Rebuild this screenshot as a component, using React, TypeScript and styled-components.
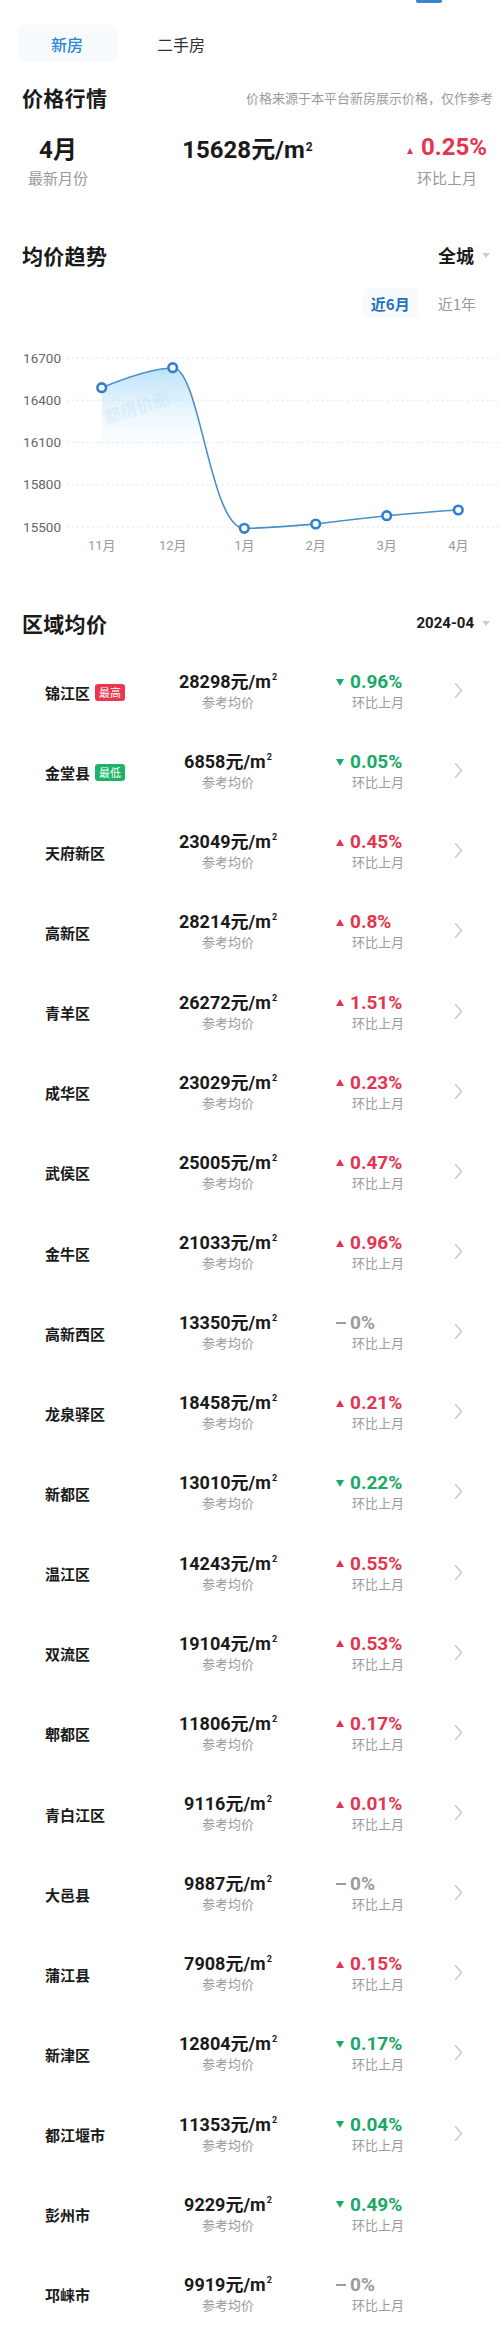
import React from "react";
import styled, { createGlobalStyle, css } from "styled-components";

const GlobalStyle = createGlobalStyle`
  html, body { margin: 0; padding: 0; background: #fff; }
  body {
    font-family: "Noto Sans CJK SC", "Noto Sans", sans-serif;
    color: #1a1a1a;
    -webkit-font-smoothing: antialiased;
  }
  * { box-sizing: border-box; }
`;

const NUM_FONT = `Roboto, "Noto Sans CJK SC", sans-serif`;
const RED = "#e5344f";
const GREEN = "#1aa866";
const GRAY = "#9a9a9a";

const Page = styled.div`
  width: 500px;
  overflow: hidden;
  padding-bottom: 5px;
`;

const TopStrip = styled.div`
  height: 3px;
  display: flex;
  padding-left: 416px;
`;

const TopIndicator = styled.div`
  width: 26px;
  height: 2.5px;
  border-radius: 0 0 2px 2px;
  background: #3a84d0;
`;

const Tabs = styled.div`
  display: flex;
  gap: 14px;
  padding-left: 17px;
  margin-top: 22px;
`;

const Tab = styled.div<{ $active?: boolean }>`
  width: 100px;
  height: 37px;
  border-radius: 6px;
  display: flex;
  align-items: center;
  justify-content: center;
  font-size: 16px;
  color: #333;
  ${(p) =>
    p.$active &&
    css`
      background: #f8fbfe;
      color: #2b86d9;
      font-weight: 500;
    `}
`;

const SectionHeader = styled.div<{ $top: number }>`
  display: flex;
  align-items: center;
  justify-content: space-between;
  height: 30px;
  margin-top: ${(p) => p.$top}px;
  padding: 0 10px 0 22px;
`;

const SectionTitle = styled.h2`
  margin: 0;
  font-size: 21px;
  font-weight: 700;
  color: #1a1a1a;
  letter-spacing: 0.3px;
`;

const Note = styled.span`
  font-size: 13px;
  color: ${GRAY};
  white-space: nowrap;
  margin-right: -3px;
`;

const Stats = styled.div`
  display: flex;
  justify-content: space-between;
  padding: 0 13px 0 28px;
  margin-top: 19px;
`;

const Stat = styled.div`
  display: flex;
  flex-direction: column;
  align-items: center;
`;

const StatValue = styled.div<{ $color?: string }>`
  display: flex;
  align-items: center;
  height: 32px;
  font-family: ${NUM_FONT};
  font-size: 24px;
  font-weight: 700;
  color: ${(p) => p.$color || "#1a1a1a"};
`;

const StatLabel = styled.div`
  margin-top: 5px;
  line-height: 20px;
  font-size: 15px;
  color: ${GRAY};
`;

const Sup = styled.span`
  font-size: 0.5em;
  vertical-align: 0.9em;
  line-height: 0;
  margin-left: 1px;
`;

const Triangle = styled.span<{ $dir: "up" | "down"; $size?: number }>`
  display: inline-block;
  width: 0;
  height: 0;
  border-left: ${(p) => (p.$size || 7) / 2}px solid transparent;
  border-right: ${(p) => (p.$size || 7) / 2}px solid transparent;
  ${(p) =>
    p.$dir === "up"
      ? css`
          border-bottom: ${(p.$size || 7) - 1}px solid ${RED};
        `
      : css`
          border-top: ${(p.$size || 7) - 1}px solid ${GREEN};
        `}
`;

const StatTriangle = styled(Triangle)`
  align-self: flex-end;
  margin: 0 8px 9px 0;
`;

const Picker = styled.div`
  display: flex;
  align-items: center;
  gap: 8px;
`;

const PickerText = styled.span<{ $num?: boolean }>`
  font-size: ${(p) => (p.$num ? "15px" : "18px")};
  font-weight: 700;
  font-family: ${(p) => (p.$num ? NUM_FONT : "inherit")};
  color: #1a1a1a;
`;

const Caret = styled.span`
  width: 0;
  height: 0;
  border-left: 4px solid transparent;
  border-right: 4px solid transparent;
  border-top: 5px solid #cfcfcf;
`;

const RangeRow = styled.div`
  display: flex;
  justify-content: flex-end;
  gap: 12px;
  margin-top: 18px;
  padding-right: 16px;
  height: 30px;
`;

const RangeOption = styled.div<{ $active?: boolean }>`
  display: flex;
  align-items: center;
  padding: 0 8px;
  border-radius: 4px;
  font-size: 15px;
  color: ${(p) => (p.$active ? "#1f70c1" : GRAY)};
  font-weight: ${(p) => (p.$active ? 700 : 400)};
  background: ${(p) => (p.$active ? "#f8fbfe" : "transparent")};
`;

const ChartSvg = styled.svg`
  display: block;
  width: 500px;
  height: 250px;
`;

const RegionList = styled.div`
  margin-top: 14px;
`;

const RegionRow = styled.div`
  display: grid;
  grid-template-columns: 120px 126px 1fr 20px;
  align-items: center;
  height: 80.15px;
  padding: 0 26px 0 45px;
`;

const NameCell = styled.div`
  display: flex;
  align-items: center;
  gap: 5px;
`;

const Name = styled.span`
  font-size: 15px;
  font-weight: 700;
  color: #1a1a1a;
  white-space: nowrap;
`;

const Badge = styled.span<{ $kind: "high" | "low" }>`
  display: inline-flex;
  align-items: center;
  justify-content: center;
  height: 17px;
  padding: 0 4px;
  border-radius: 3px;
  font-size: 11px;
  color: #fff;
  background: ${(p) => (p.$kind === "high" ? "#e8374f" : "#1db46a")};
`;

const PriceCell = styled.div`
  display: flex;
  flex-direction: column;
  align-items: center;
`;

const Price = styled.div`
  line-height: 20px;
  font-family: ${NUM_FONT};
  font-size: 18px;
  font-weight: 700;
  color: #1a1a1a;
  white-space: nowrap;
`;

const SubLabel = styled.div`
  line-height: 20px;
  font-size: 13px;
  color: ${GRAY};
`;

const ChangeCell = styled.div`
  display: flex;
  align-items: flex-start;
  padding-left: 45px;
`;

const ChangeMark = styled.div`
  width: 14px;
  height: 20px;
  display: flex;
  align-items: center;
`;

const Dash = styled.span`
  width: 10px;
  height: 2px;
  background: ${GRAY};
`;

const ChangeBody = styled.div`
  display: flex;
  flex-direction: column;
  align-items: flex-start;
`;

const ChangeValue = styled.div<{ $trend: "up" | "down" | "flat" }>`
  line-height: 20px;
  font-family: ${NUM_FONT};
  font-size: 19px;
  font-weight: 700;
  color: ${(p) => (p.$trend === "up" ? RED : p.$trend === "down" ? GREEN : GRAY)};
`;

const ChangeSub = styled(SubLabel)`
  padding-left: 2px;
`;

const Chevron = () => (
  <svg width="9" height="17" viewBox="0 0 9 17">
    <path d="M1.5 1.5 L7.5 8.5 L1.5 15.5" fill="none" stroke="#c9c9c9" strokeWidth="1.4" strokeLinecap="round" strokeLinejoin="round" />
  </svg>
);

type Trend = "up" | "down" | "flat";
interface Region {
  name: string;
  price: number;
  trend: Trend;
  change: string;
  badge?: "high" | "low";
  arrow: boolean;
}

const regions: Region[] = [
  { name: "锦江区", price: 28298, trend: "down", change: "0.96%", badge: "high", arrow: true },
  { name: "金堂县", price: 6858, trend: "down", change: "0.05%", badge: "low", arrow: true },
  { name: "天府新区", price: 23049, trend: "up", change: "0.45%", arrow: true },
  { name: "高新区", price: 28214, trend: "up", change: "0.8%", arrow: true },
  { name: "青羊区", price: 26272, trend: "up", change: "1.51%", arrow: true },
  { name: "成华区", price: 23029, trend: "up", change: "0.23%", arrow: true },
  { name: "武侯区", price: 25005, trend: "up", change: "0.47%", arrow: true },
  { name: "金牛区", price: 21033, trend: "up", change: "0.96%", arrow: true },
  { name: "高新西区", price: 13350, trend: "flat", change: "0%", arrow: true },
  { name: "龙泉驿区", price: 18458, trend: "up", change: "0.21%", arrow: true },
  { name: "新都区", price: 13010, trend: "down", change: "0.22%", arrow: true },
  { name: "温江区", price: 14243, trend: "up", change: "0.55%", arrow: true },
  { name: "双流区", price: 19104, trend: "up", change: "0.53%", arrow: true },
  { name: "郫都区", price: 11806, trend: "up", change: "0.17%", arrow: true },
  { name: "青白江区", price: 9116, trend: "up", change: "0.01%", arrow: true },
  { name: "大邑县", price: 9887, trend: "flat", change: "0%", arrow: true },
  { name: "蒲江县", price: 7908, trend: "up", change: "0.15%", arrow: true },
  { name: "新津区", price: 12804, trend: "down", change: "0.17%", arrow: true },
  { name: "都江堰市", price: 11353, trend: "down", change: "0.04%", arrow: true },
  { name: "彭州市", price: 9229, trend: "down", change: "0.49%", arrow: false },
  { name: "邛崃市", price: 9919, trend: "flat", change: "0%", arrow: false },
];

const yTicks = [
  { label: "16700", y: 40 },
  { label: "16400", y: 82.25 },
  { label: "16100", y: 124.5 },
  { label: "15800", y: 166.75 },
  { label: "15500", y: 209 },
];

const points = [
  { m: "11月", x: 101.7, y: 69.7 },
  { m: "12月", x: 172.7, y: 49.7 },
  { m: "1月", x: 244.3, y: 210.3 },
  { m: "2月", x: 315.7, y: 206 },
  { m: "3月", x: 386.7, y: 197.7 },
  { m: "4月", x: 458.3, y: 192 },
];

const linePath =
  "M101.7,69.7 C125,60 150,51 172.7,49.7 C200,49.7 210,210.3 244.3,210.3 C268,210.3 292,208 315.7,206 C340,203 362,200.5 386.7,197.7 C410,195.5 434,193.5 458.3,192";

const TrendChart = () => (
  <ChartSvg viewBox="0 0 500 250">
    <defs>
      <linearGradient id="areaFill" x1="0" y1="48" x2="0" y2="138" gradientUnits="userSpaceOnUse">
        <stop offset="0" stopColor="#8fcdf5" stopOpacity="0.62" />
        <stop offset="0.6" stopColor="#c8e9fc" stopOpacity="0.3" />
        <stop offset="1" stopColor="#e6f6ff" stopOpacity="0" />
      </linearGradient>
    </defs>
    {yTicks.map((t) => (
      <g key={t.label}>
        <line x1="67" x2="500" y1={t.y} y2={t.y} stroke="#dcdcdc" strokeWidth="1" strokeDasharray="1.5 3.5" />
        <text x="61" y={t.y + 4.7} textAnchor="end" fontFamily="Roboto, sans-serif" fontSize="13.5" fill="#666">
          {t.label}
        </text>
      </g>
    ))}
    <path d={`${linePath} L458.3,209 L101.7,209 Z`} fill="url(#areaFill)" />
    <text
      x="137"
      y="96"
      textAnchor="middle"
      fontFamily='"Noto Sans CJK SC", sans-serif'
      fontSize="17"
      fontWeight="700"
      fill="rgba(150,190,225,0.16)"
      transform="rotate(-18 137 90)"
    >
      都房价圈
    </text>
    <path d={linePath} fill="none" stroke="#4a8fc9" strokeWidth="1.6" />
    {points.map((p) => (
      <g key={p.m}>
        <circle cx={p.x} cy={p.y} r="4.3" fill="#fff" stroke="#2d7fd8" strokeWidth="2.6" />
        <text
          x={p.x}
          y="231.5"
          textAnchor="middle"
          fontFamily='Roboto, "Noto Sans CJK SC", sans-serif'
          fontSize="13"
          fill="#9a9a9a"
        >
          {p.m}
        </text>
      </g>
    ))}
  </ChartSvg>
);

const Unit = () => (
  <>
    元/m<Sup>2</Sup>
  </>
);

export default function App() {
  return (
    <Page>
      <GlobalStyle />
      <TopStrip>
        <TopIndicator />
      </TopStrip>
      <Tabs>
        <Tab $active>新房</Tab>
        <Tab>二手房</Tab>
      </Tabs>

      <SectionHeader $top={20}>
        <SectionTitle>价格行情</SectionTitle>
        <Note>价格来源于本平台新房展示价格，仅作参考</Note>
      </SectionHeader>
      <Stats>
        <Stat>
          <StatValue>4月</StatValue>
          <StatLabel>最新月份</StatLabel>
        </Stat>
        <Stat>
          <StatValue>
            15628<Unit />
          </StatValue>
          <StatLabel>&nbsp;</StatLabel>
        </Stat>
        <Stat>
          <StatValue $color={RED}>
            <StatTriangle $dir="up" $size={7} />
            0.25%
          </StatValue>
          <StatLabel>环比上月</StatLabel>
        </Stat>
      </Stats>

      <SectionHeader $top={52}>
        <SectionTitle>均价趋势</SectionTitle>
        <Picker>
          <PickerText>全城</PickerText>
          <Caret />
        </Picker>
      </SectionHeader>
      <RangeRow>
        <RangeOption $active>近6月</RangeOption>
        <RangeOption>近1年</RangeOption>
      </RangeRow>
      <TrendChart />

      <SectionHeader $top={40}>
        <SectionTitle>区域均价</SectionTitle>
        <Picker>
          <PickerText $num>2024-04</PickerText>
          <Caret />
        </Picker>
      </SectionHeader>
      <RegionList>
        {regions.map((r) => (
          <RegionRow key={r.name}>
            <NameCell>
              <Name>{r.name}</Name>
              {r.badge && <Badge $kind={r.badge}>{r.badge === "high" ? "最高" : "最低"}</Badge>}
            </NameCell>
            <PriceCell>
              <Price>
                {r.price}
                <Unit />
              </Price>
              <SubLabel>参考均价</SubLabel>
            </PriceCell>
            <ChangeCell>
              <ChangeMark>
                {r.trend === "flat" ? <Dash /> : <Triangle $dir={r.trend} $size={8} />}
              </ChangeMark>
              <ChangeBody>
                <ChangeValue $trend={r.trend}>{r.change}</ChangeValue>
                <ChangeSub>环比上月</ChangeSub>
              </ChangeBody>
            </ChangeCell>
            <div>{r.arrow && <Chevron />}</div>
          </RegionRow>
        ))}
      </RegionList>
    </Page>
  );
}
